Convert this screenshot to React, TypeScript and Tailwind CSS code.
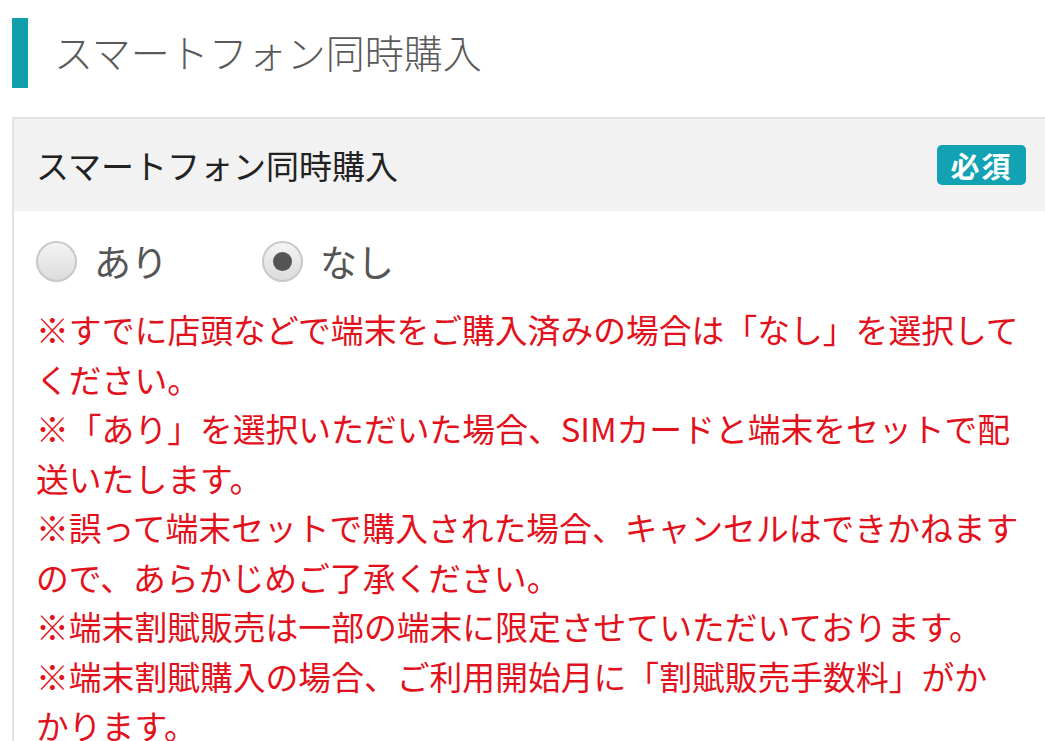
import React from "react";

const notes: React.ReactNode[] = [
  "※すでに店頭などで端末をご購入済みの場合は「なし」を選択してください。",
  "※「あり」を選択いただいた場合、SIMカードと端末をセットで配送いたします。",
  "※誤って端末セットで購入された場合、キャンセルはできかねますので、あらかじめご了承ください。",
  "※端末割賦販売は一部の端末に限定させていただいております。",
  <>
    ※端末割賦購入の場合、ご利用開始月に「割賦販売手数料」がか
    <br />
    かります。
  </>,
];

function Radio({ checked, label }: { checked?: boolean; label: string }) {
  return (
    <label className="flex items-center gap-[17px]">
      <span className="w-[41px] h-[41px] rounded-full border-2 border-[#c8c8c8] bg-gradient-to-b from-[#f4f4f4] to-[#dcdcdc] flex items-center justify-center">
        {checked && <span className="w-[19px] h-[19px] rounded-full bg-[#555]" />}
      </span>
      <span className="text-[37px] leading-none text-[#555]">{label}</span>
    </label>
  );
}

export default function App() {
  return (
    <div
      className="w-[1045px] h-[741px] overflow-hidden bg-white"
      style={{ fontFamily: '"Noto Sans CJK JP", "Noto Sans", sans-serif' }}
    >
      {/* Section title */}
      <div className="flex items-center gap-[26px] pl-[12px] pt-[18px] h-[88px]">
        <span className="w-[16px] h-[70px] bg-[#0fa0aa]" />
        <h1 className="text-[39px] font-light text-[#5a5a5a] leading-none -mt-[4px]">スマートフォン同時購入</h1>
      </div>

      {/* Card */}
      <div className="ml-[12px] mt-[29px] w-[1040px] border-2 border-[#e2e2e2]">
        <div className="h-[92px] bg-[#f2f2f2] flex items-center justify-between pl-[22px] pr-[24px]">
          <span className="text-[33px] text-[#222] leading-none">スマートフォン同時購入</span>
          <span className="w-[89px] h-[40px] rounded-[5px] bg-[#12a2b3] text-white text-[29px] font-bold leading-none flex items-center justify-center tracking-[2px]">
            必須
          </span>
        </div>

        <div className="pl-[22px] pr-[14px] pt-[30px] pb-[20px]">
          <div className="flex items-center gap-[94px]">
            <Radio label="あり" />
            <Radio checked label="なし" />
          </div>
          <div className="mt-[22px] text-[32.8px] leading-[49.5px] text-[#e2111b]">
            {notes.map((n, i) => (
              <p key={i}>{n}</p>
            ))}
          </div>
        </div>
      </div>
    </div>
  );
}
